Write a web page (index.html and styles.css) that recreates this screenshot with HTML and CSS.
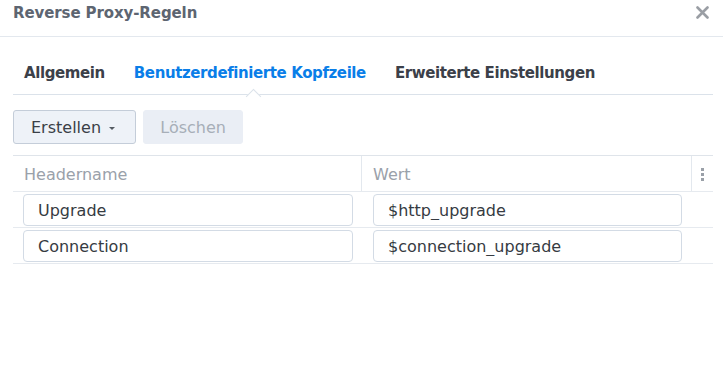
FILE: index.html
```html
<!DOCTYPE html>
<html lang="de">
<head>
    <meta charset="UTF-8">
    <title>Reverse Proxy-Regeln</title>
    <link rel="stylesheet" href="styles.css">
</head>
<body>
    <div class="dialog">
        <!-- Kopfzeile -->
        <div class="dialog-header">
            <span class="dialog-title">Reverse Proxy-Regeln</span>
            <svg class="close" width="13" height="13" viewBox="0 0 13 13">
                <path d="M1.5 1.5 L11.5 11.5 M11.5 1.5 L1.5 11.5" stroke="#9a9ea4" stroke-width="2.6" stroke-linecap="round"/>
            </svg>
        </div>

        <div class="dialog-body">
            <!-- Tabs -->
            <div class="tabs">
                <div class="tab">Allgemein</div>
                <div class="tab active">Benutzerdefinierte Kopfzeile</div>
                <div class="tab">Erweiterte Einstellungen</div>
            </div>

            <!-- Toolbar -->
            <div class="toolbar">
                <button class="btn">Erstellen <span class="caret"></span></button>
                <button class="btn disabled">Löschen</button>
            </div>

            <!-- Tabelle -->
            <div class="grid">
                <div class="row head">
                    <div class="cell name">Headername</div>
                    <div class="cell value">Wert</div>
                    <div class="cell menu"><span class="dots"></span></div>
                </div>
                <div class="row">
                    <div class="cell name"><input class="field" value="Upgrade"></div>
                    <div class="cell value"><input class="field" value="$http_upgrade"></div>
                    <div class="cell menu"></div>
                </div>
                <div class="row">
                    <div class="cell name"><input class="field" value="Connection"></div>
                    <div class="cell value"><input class="field" value="$connection_upgrade"></div>
                    <div class="cell menu"></div>
                </div>
            </div>
        </div>
    </div>
</body>
</html>
```

FILE: styles.css
```css
body {
    margin: 0;
    padding: 0;
    background-color: #ffffff;
    font-family: "DejaVu Sans", Verdana, sans-serif;
}
.dialog {
    width: 723px;
    height: 385px;
}
.dialog-header {
    display: flex;
    align-items: center;
    justify-content: space-between;
    height: 37px;
    padding: 0 13px 0 13px;
    border-bottom: 1px solid #e3e8ee;
    box-sizing: border-box;
}
.dialog-title {
    margin-top: -11px;
    font-size: 15px;
    font-weight: bold;
    letter-spacing: -0.1px;
    color: #5d6571;
}
.close {
    margin-top: -12px;
    margin-right: 1px;
}

.dialog-body {
    padding: 0 10px 0 13px;
}

/* Tabs */
.tabs {
    display: flex;
    gap: 29px;
    margin-top: 22px;
    padding-left: 11px;
    height: 35px;
    border-bottom: 1px solid #dbe2ea;
}
.tab {
    position: relative;
    font-size: 15px;
    font-weight: bold;
    letter-spacing: -0.4px;
    color: #3b4049;
    line-height: 28px;
}
.tab.active {
    color: #0a7ee8;
}
.tab.active::after {
    content: "";
    position: absolute;
    left: 50%;
    bottom: -8px;
    width: 10px;
    height: 10px;
    margin-left: -2px;
    background: #ffffff;
    border-left: 1px solid #dbe2ea;
    border-top: 1px solid #dbe2ea;
    transform: rotate(45deg);
}

/* Buttons */
.toolbar {
    display: flex;
    gap: 7px;
    margin-top: 15px;
}
.btn {
    height: 34px;
    padding: 0 20px 0 17px;
    font-family: "DejaVu Sans", Verdana, sans-serif;
    font-size: 16px;
    color: #3a3f47;
    background: #eef2f8;
    border: 1px solid #c4cdd9;
    border-radius: 3px;
}
.btn.disabled {
    width: 100px;
    padding: 0;
    color: #a7aeb8;
    background: #eaeef5;
    border-color: #eaeef5;
}
.caret {
    display: inline-block;
    margin-left: 3px;
    vertical-align: middle;
    border-left: 3px solid transparent;
    border-right: 3px solid transparent;
    border-top: 3px solid #555b63;
}

/* Tabelle */
.grid {
    margin-top: 11px;
    border-top: 1px solid #dfe4ea;
}
.row {
    display: flex;
    height: 36px;
    border-bottom: 1px solid #e6eaef;
    box-sizing: border-box;
}
.cell {
    display: flex;
    align-items: center;
    box-sizing: border-box;
}
.cell.name {
    width: 349px;
    padding: 0 9px 0 10px;
}
.cell.value {
    width: 330px;
    padding: 0 10px 0 11px;
}
.cell.menu {
    width: 21px;
    justify-content: center;
}
.row.head .cell {
    font-size: 16px;
    color: #9aa1aa;
    padding-top: 1px;
}
.row.head .cell.name {
    padding-left: 11px;
    border-right: 1px solid #e3e8ee;
}
.row.head .cell.value {
    border-right: 1px solid #e3e8ee;
}
.dots {
    width: 3px;
    height: 3px;
    background: #9aa0a8;
    box-shadow: 0 5px 0 #9aa0a8, 0 -5px 0 #9aa0a8;
}
.field {
    width: 100%;
    height: 32px;
    padding: 1px 14px 0 14px;
    box-sizing: border-box;
    font-family: "DejaVu Sans", Verdana, sans-serif;
    font-size: 16px;
    color: #363b42;
    border: 1px solid #d3dbe5;
    border-radius: 4px;
    outline: none;
}
```
